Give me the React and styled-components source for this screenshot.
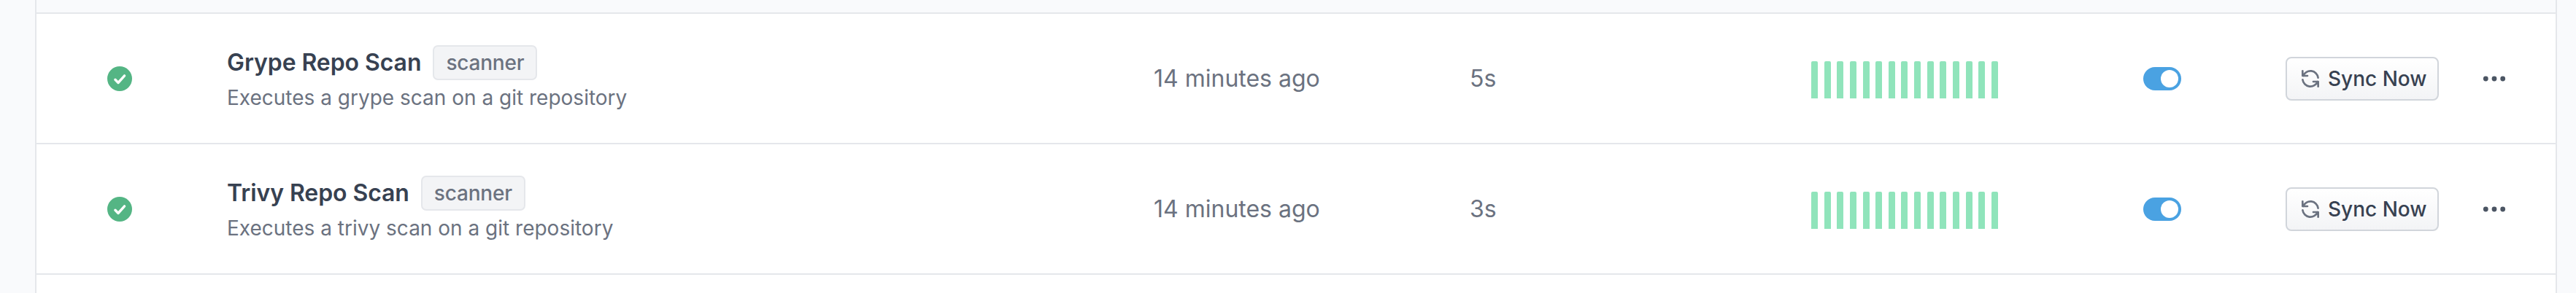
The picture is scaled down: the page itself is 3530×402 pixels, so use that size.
import React from "react";
import styled, { createGlobalStyle } from "styled-components";

const GlobalStyle = createGlobalStyle`
  * { box-sizing: border-box; }
  body {
    margin: 0;
    background: #f9fafc;
    font-family: Inter, "Liberation Sans", sans-serif;
    font-optical-sizing: none;
    -webkit-font-smoothing: antialiased;
  }
`;

const Page = styled.main`
  height: 402px;
  padding: 0 26px 0 48px;
  overflow: hidden;
`;

const Table = styled.section`
  height: 100%;
  border-left: 2px solid #e5e7eb;
  border-right: 2px solid #e5e7eb;
  background: #fff;
`;

const HeaderStrip = styled.div`
  height: 19px;
  border-bottom: 2px solid #e5e7eb;
  background: #f9fafc;
`;

const Row = styled.div`
  display: grid;
  grid-template-columns: 261px 1270px 433px 468px 455px 195px 1fr;
  align-items: center;
  height: 179px;
  padding-top: 1px;
  border-bottom: 2px solid #e5e7eb;
`;

const StatusCell = styled.div`
  display: flex;
  padding-left: 97px;
`;

const Details = styled.div`
  display: flex;
  flex-direction: column;
`;

const TitleLine = styled.div`
  display: flex;
  align-items: center;
  gap: 16px;
  height: 48px;
`;

const Title = styled.span`
  font-size: 32px;
  line-height: 48px;
  font-weight: 600;
  letter-spacing: -0.08px;
  color: #374151;
  white-space: nowrap;
`;

const Tag = styled.span`
  display: flex;
  justify-content: center;
  width: 143px;
  height: 48px;
  border: 2px solid #e5e7eb;
  border-radius: 7px;
  background: #f3f4f6;
  color: #6b7280;
  font-size: 28px;
  font-weight: 500;
  letter-spacing: -0.2px;
  line-height: 45px;
`;

const Description = styled.span`
  font-size: 28px;
  line-height: 40px;
  margin-top: 4px;
  color: #6b7280;
  white-space: nowrap;
`;

const Value = styled.div`
  font-size: 32px;
  line-height: 48px;
  color: #6b7280;
`;

const History = styled.div`
  display: flex;
  gap: 8.64px;
  height: 51px;
  margin-top: 3px;
`;

const Run = styled.span`
  width: 9px;
  height: 100%;
  border-radius: 2px 2px 0 0;
  background: #90e4bb;
`;

const Switch = styled.div`
  display: flex;
  justify-content: flex-end;
  width: 52px;
  height: 32px;
  padding: 4px;
  border-radius: 16px;
  background: #4aa2e2;
`;

const Knob = styled.span`
  width: 24px;
  height: 24px;
  border-radius: 50%;
  background: #fff;
`;

const Actions = styled.div`
  display: flex;
  align-items: center;
  gap: 60px;
`;

const SyncButton = styled.button`
  display: flex;
  align-items: center;
  gap: 8px;
  width: 210px;
  height: 60px;
  padding: 0 0 0 16px;
  border: 2px solid #d1d5db;
  border-radius: 8px;
  background: linear-gradient(#fff, #f3f4f6);
  color: #374151;
  font: 500 28px/40px Inter, "Liberation Sans", sans-serif;
  white-space: nowrap;

  svg {
    flex-shrink: 0;
  }
`;

function CheckIcon() {
  return (
    <svg width="34" height="34" viewBox="0 0 34 34">
      <circle cx="17" cy="17" r="17" fill="#54b584" />
      <path d="M10.9 18.300 15 22.500 23.600 12.900" fill="none" stroke="#fff" strokeWidth="3.400" strokeLinecap="round" strokeLinejoin="round" />
    </svg>
  );
}

function SyncIcon() {
  return (
    <svg width="32" height="32" viewBox="0 0 24 24" fill="none" stroke="#6b7280" strokeWidth="2" strokeLinecap="round" strokeLinejoin="round">
      <path d="M4 4v5h.582m15.356 2A8.001 8.001 0 004.582 9m0 0H9m11 11v-5h-.581m0 0a8.003 8.003 0 01-15.357-2m15.357 2H15" />
    </svg>
  );
}

function MoreIcon() {
  return (
    <svg width="32" height="8" viewBox="0 0 32 8" fill="#4b5563">
      <circle cx="4.300" cy="4" r="3.400" />
      <circle cx="16" cy="4" r="3.400" />
      <circle cx="27.700" cy="4" r="3.400" />
    </svg>
  );
}

const scans = [
  { name: "Grype Repo Scan", text: "Executes a grype scan on a git repository", time: "5s" },
  { name: "Trivy Repo Scan", text: "Executes a trivy scan on a git repository", time: "3s" },
];

const runs = Array.from({ length: 15 }, (_, i) => i);

export default function App() {
  return (
    <>
      <GlobalStyle />
      <Page>
        <Table>
          <HeaderStrip />
          {scans.map((scan) => (
            <Row key={scan.name}>
              <StatusCell><CheckIcon /></StatusCell>
              <Details>
                <TitleLine>
                  <Title>{scan.name}</Title>
                  <Tag>scanner</Tag>
                </TitleLine>
                <Description>{scan.text}</Description>
              </Details>
              <Value>14 minutes ago</Value>
              <Value>{scan.time}</Value>
              <History>{runs.map((run) => <Run key={run} />)}</History>
              <Switch role="switch" aria-checked="true"><Knob /></Switch>
              <Actions>
                <SyncButton><SyncIcon />Sync Now</SyncButton>
                <MoreIcon />
              </Actions>
            </Row>
          ))}
        </Table>
      </Page>
    </>
  );
}
